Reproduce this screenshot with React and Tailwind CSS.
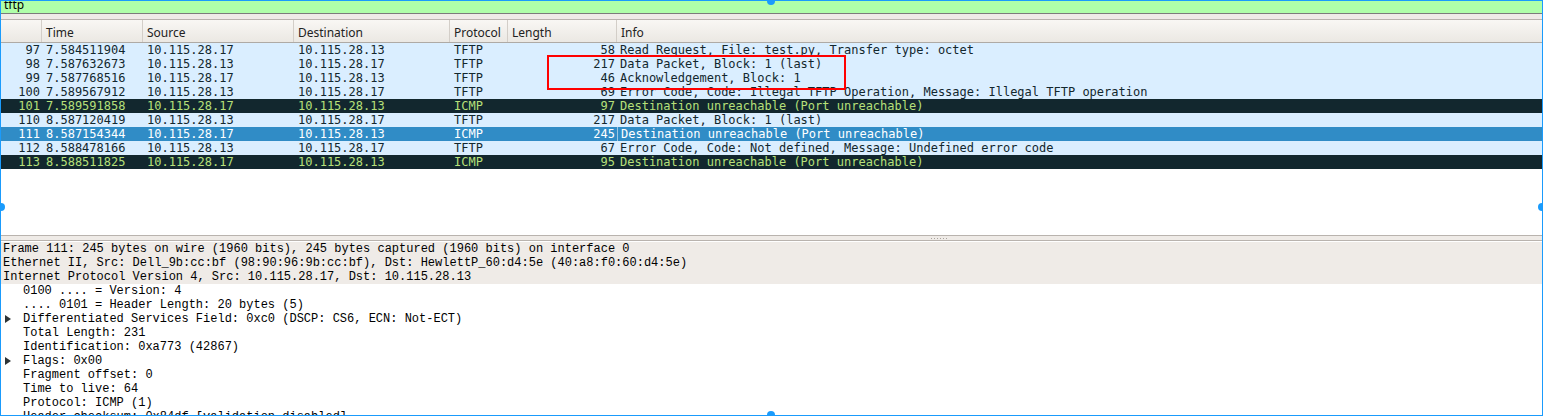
import React from "react";

const rows = [
  { no: 97, time: "7.584511904", src: "10.115.28.17", dst: "10.115.28.13", proto: "TFTP", len: 58, info: "Read Request, File: test.py, Transfer type: octet", kind: "tftp" },
  { no: 98, time: "7.587632673", src: "10.115.28.13", dst: "10.115.28.17", proto: "TFTP", len: 217, info: "Data Packet, Block: 1 (last)", kind: "tftp" },
  { no: 99, time: "7.587768516", src: "10.115.28.17", dst: "10.115.28.13", proto: "TFTP", len: 46, info: "Acknowledgement, Block: 1", kind: "tftp" },
  { no: 100, time: "7.589567912", src: "10.115.28.13", dst: "10.115.28.17", proto: "TFTP", len: 69, info: "Error Code, Code: Illegal TFTP Operation, Message: Illegal TFTP operation", kind: "tftp" },
  { no: 101, time: "7.589591858", src: "10.115.28.17", dst: "10.115.28.13", proto: "ICMP", len: 97, info: "Destination unreachable (Port unreachable)", kind: "icmp" },
  { no: 110, time: "8.587120419", src: "10.115.28.13", dst: "10.115.28.17", proto: "TFTP", len: 217, info: "Data Packet, Block: 1 (last)", kind: "tftp" },
  { no: 111, time: "8.587154344", src: "10.115.28.17", dst: "10.115.28.13", proto: "ICMP", len: 245, info: "Destination unreachable (Port unreachable)", kind: "selected" },
  { no: 112, time: "8.588478166", src: "10.115.28.13", dst: "10.115.28.17", proto: "TFTP", len: 67, info: "Error Code, Code: Not defined, Message: Undefined error code", kind: "tftp" },
  { no: 113, time: "8.588511825", src: "10.115.28.17", dst: "10.115.28.13", proto: "ICMP", len: 95, info: "Destination unreachable (Port unreachable)", kind: "icmp" },
];

const details = [
  { text: "Frame 111: 245 bytes on wire (1960 bits), 245 bytes captured (1960 bits) on interface 0", top: true },
  { text: "Ethernet II, Src: Dell_9b:cc:bf (98:90:96:9b:cc:bf), Dst: HewlettP_60:d4:5e (40:a8:f0:60:d4:5e)", top: true },
  { text: "Internet Protocol Version 4, Src: 10.115.28.17, Dst: 10.115.28.13", top: true },
  { text: "0100 .... = Version: 4" },
  { text: ".... 0101 = Header Length: 20 bytes (5)" },
  { text: "Differentiated Services Field: 0xc0 (DSCP: CS6, ECN: Not-ECT)", arrow: true },
  { text: "Total Length: 231" },
  { text: "Identification: 0xa773 (42867)" },
  { text: "Flags: 0x00", arrow: true },
  { text: "Fragment offset: 0" },
  { text: "Time to live: 64" },
  { text: "Protocol: ICMP (1)" },
  { text: "Header checksum: 0x84df [validation disabled]" },
];

const rowStyle = {
  tftp: "bg-[#daeeff] text-[#12272e]",
  icmp: "bg-[#12272e] text-[#b7e07a]",
  selected: "bg-[#308cc6] text-white",
};

const Header = ({ w, children, last }) => (
  <div className={`${w} h-full flex items-center pt-[3px] pl-[4px] ${last ? "" : "border-r border-[#d3cec8]"}`}>
    {children}
  </div>
);

export default function App() {
  return (
    <div className="relative w-[1543px] h-[416px] overflow-hidden bg-white border border-[#1a9bfc] flex flex-col font-['Noto_Sans',sans-serif] text-[12px]">
      {/* display filter */}
      <div className="h-[13px] shrink-0 bg-[#afffa9] border-b border-[#7b7b7b] overflow-hidden pl-[3px]">
        <div className="leading-[14px] -mt-[3px] text-black">tftp</div>
      </div>
      <div className="h-[6px] shrink-0 bg-[#efebe7] border-b border-[#b9b3ae]" />

      {/* column header */}
      <div className="h-[23px] shrink-0 flex bg-gradient-to-b from-[#f9f7f4] to-[#ebe8e3] border-b border-[#aeaaa5] text-[#222]">
        <Header w="w-[41px] pl-0">&nbsp;</Header>
        <Header w="w-[101px]">Time</Header>
        <Header w="w-[151px]">Source</Header>
        <Header w="w-[156px]">Destination</Header>
        <Header w="w-[58px]">Protocol</Header>
        <Header w="w-[109px]">Length</Header>
        <Header w="flex-1" last>Info</Header>
      </div>

      {/* packet list */}
      <div className="h-[192px] shrink-0 flex flex-col font-['DejaVu_Sans_Mono',monospace] text-[12px] leading-[14px]">
        {rows.map((r) => (
          <div key={r.no} className={`h-[14px] flex whitespace-pre ${rowStyle[r.kind]}`}>
            <div className="w-[41px] text-right pr-[2px]">{r.no}</div>
            <div className="w-[101px] pl-[4px]">{r.time}</div>
            <div className="w-[151px] pl-[4px]">{r.src}</div>
            <div className="w-[156px] pl-[4px]">{r.dst}</div>
            <div className="w-[58px] pl-[4px]">{r.proto}</div>
            <div className="w-[109px] text-right pr-[2px]">{r.len}</div>
            <div className={`flex-1 pl-[3px] ${r.kind === "selected" ? "border-l border-[#9cc6e3]" : ""}`}>{r.info}</div>
          </div>
        ))}
      </div>

      {/* splitter */}
      <div className="h-[6px] shrink-0 bg-[#efebe7] border-y border-[#b9b3ae] flex items-center justify-center">
        <div className="flex gap-[2px] ml-[334px]">
          {[0, 1, 2, 3, 4, 5].map((i) => (
            <div key={i} className="w-[1px] h-[1px] bg-[#a9a39d]" />
          ))}
        </div>
      </div>

      {/* packet details */}
      <div className="flex-1 flex flex-col pt-[1px] font-['Liberation_Mono',monospace] text-[12px] leading-[14px] text-black">
        {details.map((d, i) => (
          <div key={i} className={`h-[14px] shrink-0 flex items-center whitespace-pre ${d.top ? "bg-[#efebe7] pl-[2px]" : "pl-[4px]"}`}>
            {!d.top && (
              <div className="w-[18px] flex items-center">
                {d.arrow && (
                  <svg width="6" height="8" viewBox="0 0 6 8">
                    <path d="M0 0 L6 4 L0 8 Z" fill="#2e3436" />
                  </svg>
                )}
              </div>
            )}
            <span>{d.text}</span>
          </div>
        ))}
      </div>

      {/* annotation box */}
      <div className="absolute left-[546px] top-[54px] w-[299px] h-[35px] border-2 border-[#ff0000]" />

      {/* selection handles */}
      <div className="absolute left-[766px] -top-[4px] w-[8px] h-[8px] rounded-full bg-[#1a9bfc]" />
      <div className="absolute left-[766px] -bottom-[4px] w-[8px] h-[8px] rounded-full bg-[#1a9bfc]" />
      <div className="absolute -left-[4px] top-[202px] w-[8px] h-[8px] rounded-full bg-[#1a9bfc]" />
      <div className="absolute -right-[4px] top-[202px] w-[8px] h-[8px] rounded-full bg-[#1a9bfc]" />
    </div>
  );
}
